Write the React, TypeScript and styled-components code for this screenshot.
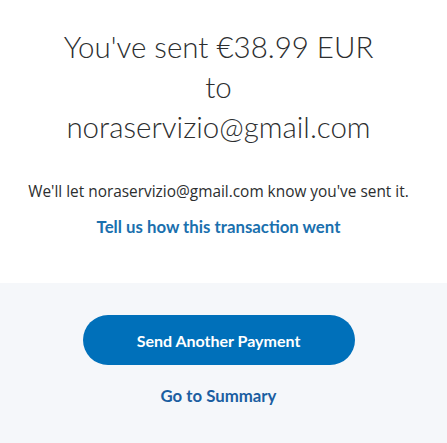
import styled, { createGlobalStyle } from "styled-components"

const GlobalStyle = createGlobalStyle`
  html, body {
    margin: 0;
    padding: 0;
    background: #f5f7fa;
  }
  body {
    font-family: "Lato", "Open Sans", sans-serif;
    color: #2c2e2f;
  }
`

const Page = styled.main`
  display: flex;
  flex-direction: column;
  width: 100%;
  min-height: 443px;
`

const Top = styled.section`
  display: flex;
  flex-direction: column;
  align-items: center;
  background: #ffffff;
  padding: 27px 10px 46px 0;
`

const Heading = styled.h1`
  margin: 0;
  font-size: 29.5px;
  line-height: 40px;
  font-weight: 300;
  color: #2c2e2f;
  text-align: center;
  white-space: nowrap;
`

const Note = styled.p`
  margin: 35px 0 0;
  font-family: "Open Sans", sans-serif;
  font-size: 15.4px;
  line-height: 20px;
  color: #2c2e2f;
  text-align: center;
  white-space: nowrap;
`

const TextLink = styled.a<{ $dark?: boolean }>`
  display: block;
  margin-top: ${(p) => (p.$dark ? "21px" : "15px")};
  font-size: 16.8px;
  line-height: 20px;
  font-weight: 700;
  color: ${(p) => (p.$dark ? "#1b5ea1" : "#1a70ae")};
  text-decoration: none;
  text-align: center;
  cursor: pointer;
`

const Bottom = styled.section`
  display: flex;
  flex-direction: column;
  align-items: center;
  flex: 1;
  background: #f5f7fa;
  padding: 32px 10px 0 0;
`

const PrimaryButton = styled.button`
  width: 272px;
  height: 50px;
  border: none;
  border-radius: 25px;
  background: #0070ba;
  color: #ffffff;
  font-family: "Lato", sans-serif;
  font-size: 16px;
  font-weight: 700;
  cursor: pointer;
`

export default function App() {
  return (
    <>
      <GlobalStyle />
      <Page>
        <Top>
          <Heading>
            You've sent €38.99 EUR
            <br />
            to
            <br />
            noraservizio@gmail.com
          </Heading>
          <Note>We'll let noraservizio@gmail.com know you've sent it.</Note>
          <TextLink>Tell us how this transaction went</TextLink>
        </Top>
        <Bottom>
          <PrimaryButton>Send Another Payment</PrimaryButton>
          <TextLink $dark>Go to Summary</TextLink>
        </Bottom>
      </Page>
    </>
  )
}
